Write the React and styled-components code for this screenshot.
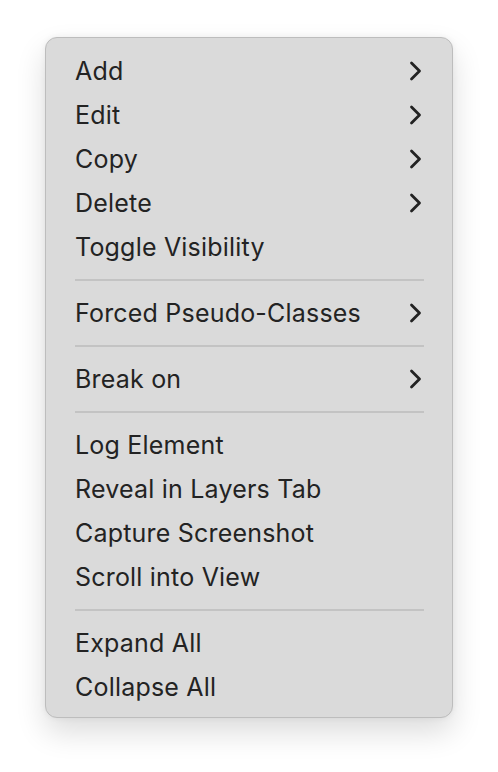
import React from "react";
import styled, { createGlobalStyle } from "styled-components";

const Global = createGlobalStyle`
  html, body { margin: 0; padding: 0; background: #ffffff; }
  body { font-family: Inter, "Noto Sans", sans-serif; -webkit-font-smoothing: antialiased; }
`;

const Page = styled.div`
  width: 498px;
  height: 772px;
  box-sizing: border-box;
  padding: 37px 0 0 45px;
`;

const Menu = styled.div`
  width: 408px;
  box-sizing: border-box;
  background: #dadada;
  border: 1px solid #bdbdbd;
  border-radius: 12px;
  padding: 11px 0 8px;
  box-shadow: 0 14px 30px rgba(0, 0, 0, 0.14), 0 0 6px rgba(0, 0, 0, 0.06);
`;

const Item = styled.div`
  height: 44px;
  display: flex;
  align-items: center;
  justify-content: space-between;
  padding: 0 30px 0 29px;
  font-size: 25px;
  color: #232323;
  letter-spacing: 0.2px;
`;

const Sep = styled.div`
  height: 22px;
  display: flex;
  align-items: center;
  padding: 0 28px 0 29px;
  &::after {
    content: "";
    flex: 1;
    height: 2px;
    background: #c3c3c3;
  }
`;

const Chevron = () => (
  <svg width="13" height="20" viewBox="0 0 13 20">
    <path d="M2.5 2 L10.5 10 L2.5 18" fill="none" stroke="#222" strokeWidth="2.8" strokeLinecap="round" strokeLinejoin="round" />
  </svg>
);

const groups = [
  [["Add", true], ["Edit", true], ["Copy", true], ["Delete", true], ["Toggle Visibility", false]],
  [["Forced Pseudo-Classes", true]],
  [["Break on", true]],
  [["Log Element", false], ["Reveal in Layers Tab", false], ["Capture Screenshot", false], ["Scroll into View", false]],
  [["Expand All", false], ["Collapse All", false]],
];

export default function App() {
  return (
    <Page>
      <Global />
      <Menu>
        {groups.map((g, gi) => (
          <React.Fragment key={gi}>
            {gi > 0 && <Sep />}
            {g.map(([label, sub]) => (
              <Item key={label}>
                <span>{label}</span>
                {sub && <Chevron />}
              </Item>
            ))}
          </React.Fragment>
        ))}
      </Menu>
    </Page>
  );
}
